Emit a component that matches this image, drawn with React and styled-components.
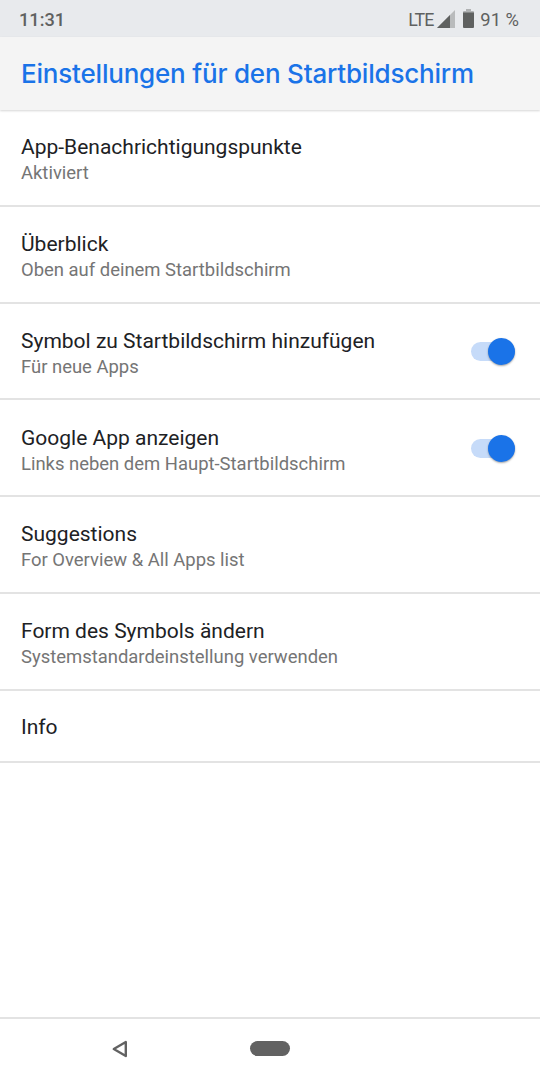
import React, { useState } from "react";
import styled, { createGlobalStyle } from "styled-components";

const GlobalStyle = createGlobalStyle`
  * {
    box-sizing: border-box;
  }
  body {
    margin: 0;
    background-color: #fff;
  }
`;

const Screen = styled.div`
  display: flex;
  flex-direction: column;
  width: 540px;
  height: 1080px;
  overflow: hidden;
  background-color: #fff;
  font-family: Roboto, "Liberation Sans", sans-serif;
`;
const StatusBar = styled.div`
  display: flex;
  justify-content: space-between;
  align-items: center;
  flex: none;
  height: 37px;
  padding: 1px 21px 0 19px;
  background-color: #e8eaed;
  color: #5f6160;
`;
const Clock = styled.span`
  font-size: 18.2px;
  font-weight: 500;
`;
const StatusIcons = styled.div`
  display: flex;
  align-items: center;
`;
const Network = styled.span`
  width: 29px;
  font-size: 17.8px;
  letter-spacing: -0.9px;
`;
const SignalIcon = styled.svg`
  display: block;
  width: 18px;
  height: 18px;
`;
const BatteryIcon = styled.svg`
  display: block;
  width: 11px;
  height: 19px;
  margin: -1px 6px 0 8px;
`;
const Percent = styled.span`
  font-size: 18.4px;
`;
const Header = styled.header`
  display: flex;
  align-items: center;
  flex: none;
  height: 73px;
  padding: 0 21px;
  background-color: #f4f4f4;
  box-shadow: 0 1px 2px rgba(0, 0, 0, 0.16);
`;
const Heading = styled.h1`
  margin: 0;
  color: #1a73e8;
  font-family: Inter, Roboto, sans-serif;
  font-size: 26px;
  font-weight: 500;
  letter-spacing: -0.2px;
  white-space: nowrap;
`;
const List = styled.main`
  flex: 1;
`;
const Row = styled.div`
  display: flex;
  justify-content: space-between;
  align-items: center;
  height: ${(props) => (props.$single ? "72px" : "96.8px")};
  padding: ${(props) => (props.$single ? "2px" : "6.5px")} 25px 0 21px;
  border-bottom: 2px solid #e3e3e3;
`;
const Title = styled.div`
  color: #202124;
  font-size: 21px;
  line-height: 26px;
`;
const Summary = styled.div`
  color: #757575;
  font-size: 18.45px;
  line-height: 27px;
`;
const Track = styled.button`
  display: flex;
  align-items: center;
  justify-content: ${(props) => (props.$on ? "flex-end" : "flex-start")};
  width: 44px;
  height: 19px;
  margin-top: -5px;
  padding: 0;
  border: none;
  border-radius: 10px;
  background-color: ${(props) => (props.$on ? "#c6dbf9" : "#cccccc")};
  cursor: pointer;
`;
const Thumb = styled.span`
  flex: none;
  width: 27px;
  height: 27px;
  border-radius: 50%;
  background-color: ${(props) => (props.$on ? "#1a73e8" : "#f1f1f1")};
  box-shadow: 0 1px 2px rgba(0, 0, 0, 0.35);
`;
const NavBar = styled.nav`
  display: flex;
  align-items: center;
  flex: none;
  height: 63px;
  padding: 0 0 2px 111px;
  border-top: 2px solid #e3e3e3;
`;
const BackIcon = styled.svg`
  display: block;
  width: 18px;
  height: 18px;
`;
const HomePill = styled.div`
  width: 40px;
  height: 15px;
  margin-left: 121px;
  border-radius: 8px;
  background-color: #626262;
`;

const settings = [
  { title: "App-Benachrichtigungspunkte", summary: "Aktiviert" },
  { title: "Überblick", summary: "Oben auf deinem Startbildschirm" },
  {
    title: "Symbol zu Startbildschirm hinzufügen",
    summary: "Für neue Apps",
    toggle: true,
  },
  {
    title: "Google App anzeigen",
    summary: "Links neben dem Haupt-Startbildschirm",
    toggle: true,
  },
  { title: "Suggestions", summary: "For Overview & All Apps list" },
  {
    title: "Form des Symbols ändern",
    summary: "Systemstandardeinstellung verwenden",
  },
  { title: "Info" },
];

const Toggle = () => {
  const [on, setOn] = useState(true);
  return (
    <Track $on={on} onClick={() => setOn(!on)}>
      <Thumb $on={on} />
    </Track>
  );
};

const App = () => {
  return (
    <Screen>
      <GlobalStyle />
      <StatusBar>
        <Clock>11:31</Clock>
        <StatusIcons>
          <Network>LTE</Network>
          <SignalIcon viewBox="0 0 18 18">
            <path d="M18 0V18H0Z" fill="#b9bbbc" />
            <path d="M13 5V18H0Z" fill="#5f6160" />
          </SignalIcon>
          <BatteryIcon viewBox="0 0 11 19">
            <path d="M3 0H8V2H10Q11 2 11 3V4H0V3Q0 2 1 2H3Z" fill="#b0b2b3" />
            <path d="M0 3.5H11V18Q11 19 10 19H1Q0 19 0 18Z" fill="#5f6160" />
          </BatteryIcon>
          <Percent>91 %</Percent>
        </StatusIcons>
      </StatusBar>
      <Header>
        <Heading>Einstellungen für den Startbildschirm</Heading>
      </Header>
      <List>
        {settings.map((item) => (
          <Row key={item.title} $single={!item.summary}>
            <div>
              <Title>{item.title}</Title>
              {item.summary && <Summary>{item.summary}</Summary>}
            </div>
            {item.toggle && <Toggle />}
          </Row>
        ))}
      </List>
      <NavBar>
        <BackIcon viewBox="0 0 18 18">
          <path
            d="M14.8 2V16L2.8 9Z"
            fill="none"
            stroke="#626262"
            strokeWidth="2.4"
            strokeLinejoin="round"
          />
        </BackIcon>
        <HomePill />
      </NavBar>
    </Screen>
  );
};

export default App;
